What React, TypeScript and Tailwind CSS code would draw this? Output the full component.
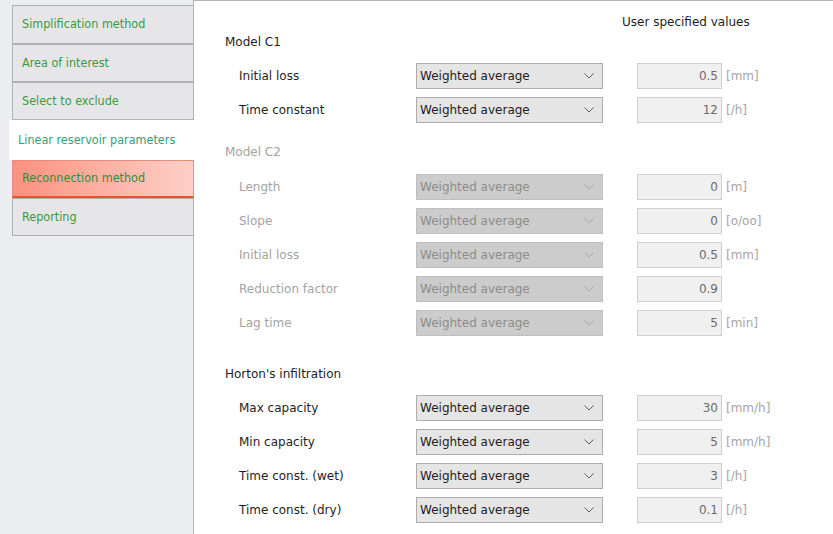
import React from "react";

type Row = { label: string; value: string; unit?: string };

const tabs = [
  { name: "Simplification method", h: "h-[39px]" },
  { name: "Area of interest", h: "h-[38px]" },
  { name: "Select to exclude", h: "h-[38px]" },
  { name: "Linear reservoir parameters", h: "h-[40px]", selected: true },
  { name: "Reconnection method", h: "h-[38px]", alert: true },
  { name: "Reporting", h: "h-[38px]" },
];

const modelC1: Row[] = [
  { label: "Initial loss", value: "0.5", unit: "[mm]" },
  { label: "Time constant", value: "12", unit: "[/h]" },
];

const modelC2: Row[] = [
  { label: "Length", value: "0", unit: "[m]" },
  { label: "Slope", value: "0", unit: "[o/oo]" },
  { label: "Initial loss", value: "0.5", unit: "[mm]" },
  { label: "Reduction factor", value: "0.9" },
  { label: "Lag time", value: "5", unit: "[min]" },
];

const horton: Row[] = [
  { label: "Max capacity", value: "30", unit: "[mm/h]" },
  { label: "Min capacity", value: "5", unit: "[mm/h]" },
  { label: "Time const. (wet)", value: "3", unit: "[/h]" },
  { label: "Time const. (dry)", value: "0.1", unit: "[/h]" },
];

function Chevron({ disabled }: { disabled?: boolean }) {
  return (
    <svg width="10" height="6" viewBox="0 0 10 6" className="mr-[8px]">
      <polyline
        points="0.5,0.5 5,5 9.5,0.5"
        fill="none"
        stroke={disabled ? "#a9a9a9" : "#606060"}
        strokeWidth="1"
      />
    </svg>
  );
}

function ParamRow({ row, disabled }: { row: Row; disabled?: boolean }) {
  return (
    <div className="flex h-[34px] items-center pt-px">
      <div className={`w-[191px] pl-[14px] ${disabled ? "text-[#a3a3a3]" : "text-[#1e1e1e]"}`}>
        {row.label}
      </div>
      <div
        className={`flex h-[26px] w-[187px] items-center justify-between border pl-[3px] ${
          disabled
            ? "border-[#bfbfbf] bg-[#cccccc] text-[#8d8d8d]"
            : "border-[#adadad] bg-[#e5e5e5] text-[#1e1e1e]"
        }`}
      >
        <span>Weighted average</span>
        <Chevron disabled={disabled} />
      </div>
      <div className="ml-[34px] flex h-[26px] w-[85px] items-center justify-end border border-[#cfcfcf] bg-[#f0f0f0] pr-[3px] text-[#6b6b6b]">
        {row.value}
      </div>
      {row.unit && <span className="ml-[4px] text-[#a6a6a6]">{row.unit}</span>}
    </div>
  );
}

function Heading({ text, disabled, className }: { text: string; disabled?: boolean; className?: string }) {
  return (
    <div
      className={`flex h-[20px] items-center ${disabled ? "text-[#a3a3a3]" : "text-[#1e1e1e]"} ${className ?? ""}`}
    >
      {text}
    </div>
  );
}

export default function App() {
  return (
    <div
      className="flex h-[534px] w-[833px] overflow-hidden bg-white text-[12px]"
      style={{ fontFamily: '"DejaVu Sans", sans-serif' }}
    >
      {/* Left tab strip */}
      <div
        className="relative z-10 w-[193px] shrink-0 bg-[#ecedf0] pt-[5px] text-[12.5px]"
        style={{ fontFamily: '"DejaVu Sans Condensed", "DejaVu Sans", sans-serif' }}
      >
        {tabs.map((t) =>
          t.selected ? (
            <div
              key={t.name}
              className={`${t.h} ml-[9px] flex w-[186px] items-center bg-white pl-[9px] text-[#36a074]`}
            >
              {t.name}
            </div>
          ) : (
            <div
              key={t.name}
              className={`${t.h} ml-[12px] flex w-[182px] items-center border pl-[9px] ${
                t.alert
                  ? "border-[#e88c7c] border-b-2 border-b-[#e0552f] bg-gradient-to-r from-[#fb917f] to-[#fdcfc8] text-[#2f8f3c]"
                  : "border-[#b1b1b5] bg-[#e6e6e9] text-[#3a9a3e]"
              }`}
            >
              {t.name}
            </div>
          )
        )}
      </div>

      {/* Settings panel */}
      <div className="flex-1 border-l border-t border-[#b4b4b8] bg-white pl-[31px]">
        <div className="h-[31px] pt-[13px] leading-[16px]">
          <span className="ml-[397px] text-[#1e1e1e]">User specified values</span>
        </div>

        <Heading text="Model C1" className="mb-[6px]" />
        {modelC1.map((r) => (
          <ParamRow key={r.label} row={r} />
        ))}

        <Heading text="Model C2" disabled className="mt-[16px] mb-[7px]" />
        {modelC2.map((r) => (
          <ParamRow key={r.label} row={r} disabled />
        ))}

        <Heading text="Horton's infiltration" className="mt-[25px] mb-[6px]" />
        {horton.map((r) => (
          <ParamRow key={r.label} row={r} />
        ))}
      </div>
    </div>
  );
}
